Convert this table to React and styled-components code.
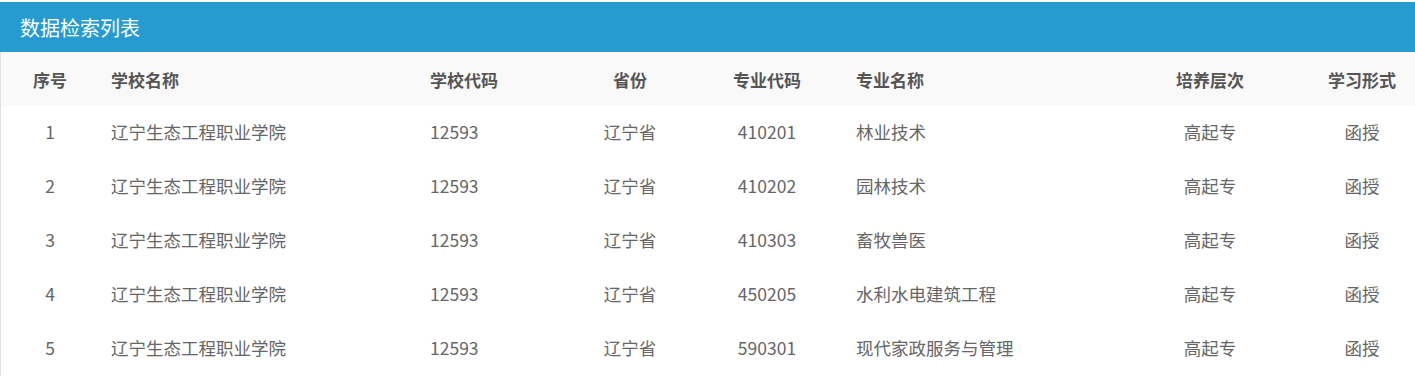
import React from "react";
import styled, { createGlobalStyle } from "styled-components";

const GlobalStyle = createGlobalStyle`
  html, body { margin: 0; padding: 0; background: #fff; }
  body { font-family: "Microsoft YaHei", "Noto Sans CJK SC", "Noto Sans", sans-serif; overflow: hidden; }
`;

const Panel = styled.section`
  width: 1415px;
  padding-top: 2px;
`;

const TitleBar = styled.header`
  height: 50px;
  background: #269bcf;
  color: #fff;
  display: flex;
  align-items: center;
  padding-left: 20px;
  font-size: 20px;
`;

const TableWrap = styled.div`
  border-left: 1px solid #e2e2e2;
`;

const COLS = "98px 319px 142px 140px 134px 277px 198px 106px";

const Row = styled.div`
  display: grid;
  grid-template-columns: ${COLS};
  height: 54px;
  align-items: center;
  background: ${(p) => (p.$head ? "#f9f9f9" : "#fff")};
  color: ${(p) => (p.$head ? "#555" : "#666")};
  font-weight: ${(p) => (p.$head ? 700 : 400)};
  font-size: ${(p) => (p.$head ? "17px" : "17.5px")};
  padding-bottom: ${(p) => (p.$head ? 0 : 3)}px;
  box-sizing: border-box;
`;

const Cell = styled.div`
  text-align: ${(p) => p.$align || "center"};
  padding-left: ${(p) => p.$pl || 0}px;
  white-space: nowrap;
`;

const columns = [
  { key: "no", label: "序号" },
  { key: "school", label: "学校名称", align: "left", pl: 12 },
  { key: "code", label: "学校代码", align: "left", pl: 12 },
  { key: "prov", label: "省份" },
  { key: "mcode", label: "专业代码" },
  { key: "major", label: "专业名称", align: "left", pl: 22 },
  { key: "level", label: "培养层次" },
  { key: "form", label: "学习形式" },
];

const majors = [
  ["410201", "林业技术"],
  ["410202", "园林技术"],
  ["410303", "畜牧兽医"],
  ["450205", "水利水电建筑工程"],
  ["590301", "现代家政服务与管理"],
];

const rows = majors.map(([mcode, major], i) => ({
  no: i + 1,
  school: "辽宁生态工程职业学院",
  code: "12593",
  prov: "辽宁省",
  mcode,
  major,
  level: "高起专",
  form: "函授",
}));

export default function App() {
  return (
    <>
      <GlobalStyle />
      <Panel>
        <TitleBar>数据检索列表</TitleBar>
        <TableWrap>
          <Row $head>
            {columns.map((c) => (
              <Cell key={c.key} $align={c.align} $pl={c.pl}>
                {c.label}
              </Cell>
            ))}
          </Row>
          {rows.map((r) => (
            <Row key={r.no}>
              {columns.map((c) => (
                <Cell key={c.key} $align={c.align} $pl={c.pl}>
                  {r[c.key]}
                </Cell>
              ))}
            </Row>
          ))}
        </TableWrap>
      </Panel>
    </>
  );
}
